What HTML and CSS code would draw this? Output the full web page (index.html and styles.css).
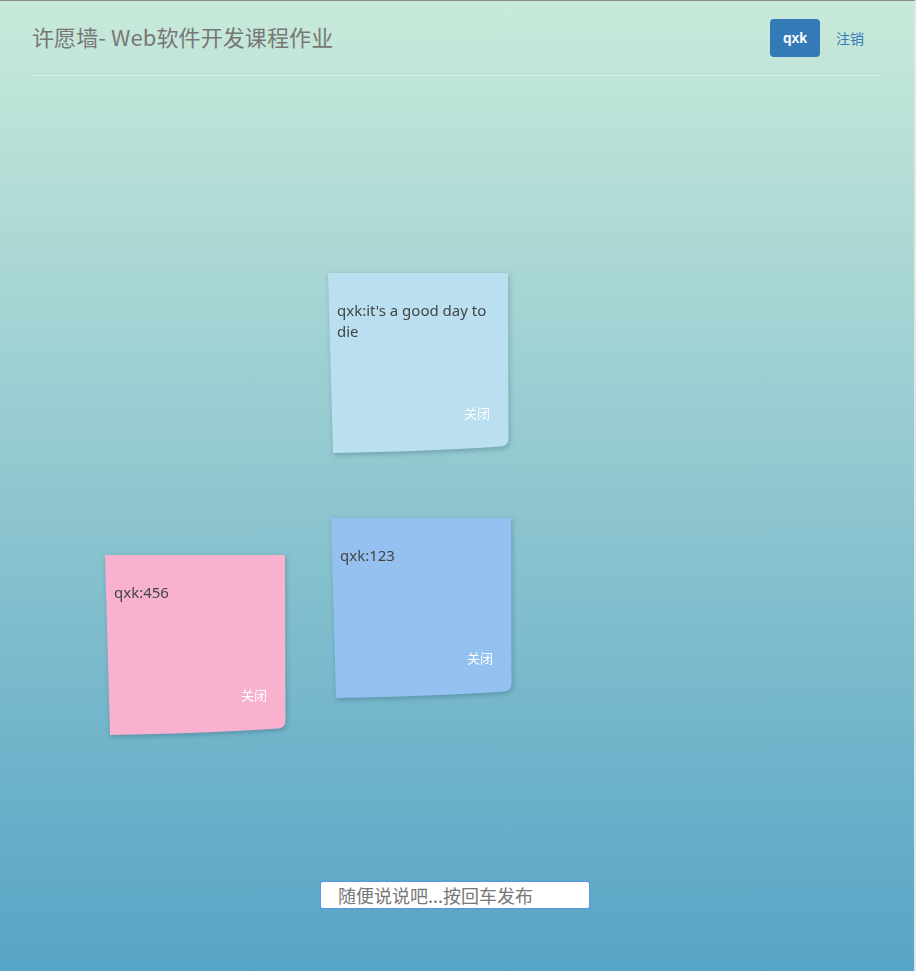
FILE: index.html
```html
<!DOCTYPE html>
<html lang="zh-CN">
<head>
<meta charset="utf-8">
<title>许愿墙</title>
<link rel="stylesheet" href="styles.css">
</head>
<body>
  <header class="topbar">
    <h1 class="brand">许愿墙- Web软件开发课程作业</h1>
    <nav class="user-nav">
      <a class="user-btn" href="#">qxk</a>
      <a class="logout" href="#">注销</a>
    </nav>
  </header>

  <main class="wall">
    <div class="note-wrap" style="left:328px; top:272px;">
      <div class="note note-sky">
        <p class="note-text">qxk:it's a good day to die</p>
        <a class="note-close" href="#">关闭</a>
      </div>
    </div>
    <div class="note-wrap" style="left:331px; top:517px;">
      <div class="note note-blue">
        <p class="note-text">qxk:123</p>
        <a class="note-close" href="#">关闭</a>
      </div>
    </div>
    <div class="note-wrap" style="left:105px; top:554px;">
      <div class="note note-pink">
        <p class="note-text">qxk:456</p>
        <a class="note-close" href="#">关闭</a>
      </div>
    </div>
  </main>

  <footer class="composer">
    <input class="wish-input" type="text" placeholder="随便说说吧...按回车发布">
  </footer>
</body>
</html>
```

FILE: styles.css
```css
html, body {
  margin: 0;
  padding: 0;
}

body {
  position: relative;
  box-sizing: border-box;
  height: 100vh;
  display: flex;
  flex-direction: column;
  border-top: 1px solid #8a8a8a;
  border-right: 2px solid #e4e6e6;
  background: linear-gradient(to bottom, #c9eada 0%, #56a4c6 100%);
  font-family: "Noto Sans", "Noto Sans CJK SC", sans-serif;
  overflow: hidden;
}

.topbar {
  margin: 0 36px 0 32px;
  height: 74px;
  display: flex;
  align-items: center;
  justify-content: space-between;
  border-bottom: 1px solid rgba(255, 255, 255, 0.45);
}

.brand {
  margin: -4px 0 0;
  font-family: "Noto Sans CJK SC", sans-serif;
  font-size: 22px;
  font-weight: normal;
  color: #777;
  line-height: 30px;
  letter-spacing: 0.1px;
}

.user-nav {
  display: flex;
  align-items: center;
}

.user-btn {
  display: block;
  height: 38px;
  line-height: 38px;
  padding: 0 13px;
  border-radius: 4px;
  background: #337ab7;
  color: #fff;
  font-family: "Liberation Sans", "Noto Sans CJK SC", sans-serif;
  font-size: 14px;
  font-weight: bold;
  text-decoration: none;
}

.logout {
  padding: 0 14px 0 16px;
  color: #337ab7;
  font-family: "Noto Sans CJK SC", sans-serif;
  font-size: 14px;
  text-decoration: none;
}

.wall {
  flex: 1;
}

.note-wrap {
  position: absolute;
  width: 182px;
  height: 182px;
  filter: drop-shadow(1px 2px 2.5px rgba(0, 40, 60, 0.25));
}

.note {
  position: relative;
  width: 182px;
  height: 182px;
  box-sizing: border-box;
  padding: 27px 10px 0 9px;
  clip-path: polygon(0 0, 180px 0, 180.5px 166px, 180px 169px, 178px 172px, 174px 173.5px, 150px 175px, 110px 177px, 70px 178.5px, 30px 179.6px, 5px 180px);
}

.note-sky { background: #b9dff0; }
.note-blue { background: #95c1f1; }
.note-pink { background: #f8b1cf; }

.note-text {
  margin: 0;
  font-size: 15px;
  line-height: 21px;
  color: #444;
}

.note-close {
  position: absolute;
  top: 131px;
  right: 20px;
  font-family: "Noto Sans CJK SC", sans-serif;
  font-size: 13px;
  line-height: 18px;
  color: #fff;
  text-decoration: none;
}

.composer {
  display: flex;
  justify-content: center;
  padding: 0 4px 62px 0;
}

.wish-input {
  box-sizing: border-box;
  width: 270px;
  height: 28px;
  margin: 0;
  padding: 0 0 0 17px;
  border: 1px solid #5e97e6;
  border-radius: 3px;
  box-shadow: 0 0 1px rgba(70, 130, 230, 0.6);
  background: #fff;
  font-family: "Noto Sans CJK SC", sans-serif;
  font-size: 18px;
  color: #555;
  outline: none;
}

.wish-input::placeholder {
  color: #777;
}
```
